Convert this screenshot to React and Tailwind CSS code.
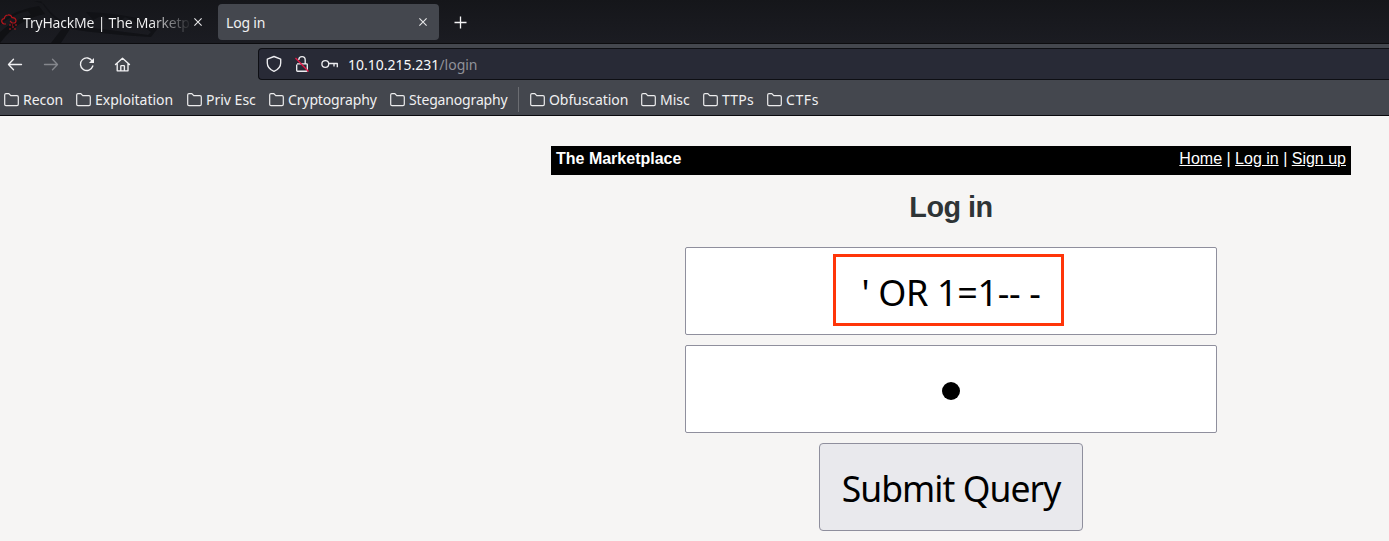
const ui = "font-['Noto_Sans',sans-serif]";

function Folder() {
  return (
    <svg className="h-[14px] w-[15px] shrink-0" viewBox="0 0 15 14" fill="none" stroke="#ececed" strokeWidth="1.2">
      <path d="M.7 11.5V2Q.7.7 2 .7H4.8L6.8 2.7H13Q14.3 2.7 14.3 4V11.3Q14.3 12.6 13 12.6H2Q.7 12.6.7 11.5Z" />
    </svg>
  );
}

function Close() {
  return (
    <svg className="h-2 w-2 shrink-0" viewBox="0 0 8 8" fill="none" stroke="#e8e8ea" strokeWidth="1.1">
      <path d="M.4.4 7.6 7.6M7.6.4.4 7.6" />
    </svg>
  );
}

const bookmarks = [
  { name: "Recon", cls: "w-[72px] tracking-[-0.05px]" },
  { name: "Exploitation", cls: "w-[111px] tracking-[0px]" },
  { name: "Priv Esc", cls: "w-[82px] tracking-[0px]" },
  { name: "Cryptography", cls: "w-[121px] tracking-[-0.13px]" },
  { name: "Steganography", cls: "w-[128px] tracking-[-0.16px]" },
  { name: "Obfuscation", cls: "ml-[11px] w-[111px] tracking-[-0.08px]" },
  { name: "Misc", cls: "w-[62px] tracking-[0px]" },
  { name: "TTPs", cls: "w-[64px] tracking-[0.2px]" },
  { name: "CTFs", cls: "w-[60px] tracking-[0.6px]" },
];

function TabBar() {
  return (
    <div className="relative flex h-11 items-start border-b border-[#0c0c0f] bg-[#1a1b20] bg-linear-to-b from-[#15161a] to-[#1b1c22]">
      <svg className="absolute top-0 left-0 h-[43px] w-[218px]" viewBox="0 0 218 43" fill="none">
        <path d="M0 22Q17 9 39 6L45 14Q18 19 0 43V32Q13 20 31 15L28 11Q12 14 0 25Z" fill="#101114" />
        <path d="M34 1H41Q48 14 64 26L51 43H61L70 29Q102 34 151 37L158 28Q149 21 137 18Q113 13 86 12L93 20L103 15Q108 22 119 23L125 17Q139 23 151 32L148 35Q103 29 76 26Q57 22 44 4Z" fill="#111216" />
      </svg>
      <div className="relative flex h-[44px] w-[218px] items-center">
        <svg className="h-4 w-[17px] shrink-0" viewBox="0 0 17 16" fill="none" stroke="#b5151c" strokeWidth="1.2">
          <path d="M6 10H4Q1.5 9 1.7 6.7Q2 4.5 4.2 4.6Q5 1 8 1Q11 .7 12 3.6Q15.5 3.4 16 6.5Q16 9 14 9H12L10 7" />
          <path d="M9 11h4M12 13h3M15 11h2M9 15h2M14 15h2" strokeDasharray="2 1" />
        </svg>
        <div className="mt-px ml-[6px] w-[169px] bg-linear-to-r from-[#f4f4f5] from-75% to-transparent bg-clip-text text-[14px] leading-5 tracking-[-0.2px] whitespace-nowrap text-transparent">TryHackMe | The Marketpl</div>
        <div className="ml-[2px]"><Close /></div>
      </div>
      <div className="mt-1 flex h-9 w-[221px] items-center rounded bg-[#44474e] px-2">
        <span className="flex-1 text-[14px] tracking-[-0.2px]">Log in</span>
        <div className="mr-[4px]"><Close /></div>
      </div>
      <svg className="mt-[16px] ml-[15px] h-[13px] w-[13px]" viewBox="0 0 13 13" stroke="#f4f4f5" strokeWidth="1.3">
        <path d="M6.5.5V12.5M.5 6.5H12.5" />
      </svg>
    </div>
  );
}

function NavBar() {
  return (
    <div className="flex h-10 items-center">
      <svg className="h-10 w-[258px] shrink-0" viewBox="0 0 258 40" fill="none" stroke="#f0f0f2" strokeWidth="1.35" strokeLinecap="round" strokeLinejoin="round">
        <path d="M13.5 15.2 8.5 20.5 13.5 25.8M8.7 20.5H21.5" />
        <path d="M52.5 15.2 57.5 20.5 52.5 25.8M57.3 20.5H44.5" stroke="#85878d" />
        <path d="M92.3 17.2A6.3 6.3 0 1 0 92.8 22" />
        <path d="M94 14V19H88.9Z" fill="#f0f0f2" stroke="none" />
        <path d="M115.5 20.5 122.5 14.2 129.5 20.5M117.2 19.3V26.8H128V19.3M120.8 26.5V22.2Q120.8 21.6 121.4 21.6H123.8Q124.4 21.6 124.4 22.2V26.5" />
      </svg>
      <div className="flex h-8 flex-1 items-center rounded-l border border-r-0 border-[#0e0f14] bg-[#282a36]">
        <svg className="h-[30px] w-[89px] shrink-0" viewBox="0 0 89 30" fill="none" stroke="#ededf0" strokeWidth="1.35" strokeLinejoin="round">
          <path d="M15 7.5 21.7 10.2V14Q21.7 19.5 15 22.4Q8.3 19.5 8.3 14V10.2Z" />
          <path d="M38 14.8H47.5Q48.3 14.8 48.3 15.6V21.3Q48.3 22.2 47.5 22.2H38.5Q37.7 22.2 37.7 21.3V15.6M39.8 11V10.5Q40 7.6 43 7.6Q46.2 7.6 46.2 11V14.5" />
          <path d="M36.5 9 49.5 22.5" stroke="#e21846" />
          <circle cx="66.3" cy="15" r="3.4" />
          <path d="M69.8 14.5H78.3V18.3M75 14.5V17.5" />
        </svg>
        <span className="mt-px text-[14px] tracking-[0px] whitespace-nowrap text-[#f8f8fa]">10.10.215.231<span className="text-[#91929a]">/login</span></span>
      </div>
    </div>
  );
}

function BookmarkBar() {
  return (
    <div className="flex h-[31px] items-center pl-1">
      {bookmarks.map((b, i) => (
        <div key={b.name} className="contents">
          {i === 5 && <div className="h-[25px] w-px bg-[#6b6d72]" />}
          <div className={`flex shrink-0 items-center gap-1 text-[14px] whitespace-nowrap ${b.cls}`}>
            <Folder />
            <span>{b.name}</span>
          </div>
        </div>
      ))}
    </div>
  );
}

export default function App() {
  return (
    <div className="h-[541px] w-[1389px] overflow-hidden bg-[#f6f5f4]">
      <header className={`h-[116px] border-b border-[#09090d] bg-[#44474e] text-[#f0f0f1] ${ui}`}>
        <TabBar />
        <NavBar />
        <BookmarkBar />
      </header>
      <main className="ml-[551px] w-[800px] pt-[30px] font-['Liberation_Sans',Arial,sans-serif]">
        <nav className="flex h-[29px] justify-between bg-black px-[5px] text-base leading-[25px] text-white">
          <b>The Marketplace</b>
          <span><a className="underline">Home</a> | <a className="underline">Log in</a> | <a className="underline">Sign up</a></span>
        </nav>
        <h1 className="mt-[15px] text-center text-[28.8px] leading-[34px] font-bold tracking-[-0.5px] text-[#2e3436]">Log in</h1>
        <form className={`mt-[23px] flex flex-col items-center text-[36px] leading-[48px] text-black ${ui}`}>
          <div className="relative flex h-[88px] w-[532px] items-center justify-center rounded-xs border border-[#8f8f9d] bg-white">
            <span className="mt-[3px] tracking-[-0.35px] whitespace-pre">' OR 1=1-- -</span>
            <div className="absolute top-[6px] left-[147px] h-[72px] w-[231px] border-3 border-[#ff3509]" />
          </div>
          <div className="mt-[10px] flex h-[88px] w-[532px] items-center justify-center rounded-xs border border-[#8f8f9d] bg-white">
            <div className="mt-[3px] h-[18px] w-[18px] rounded-full bg-black" />
          </div>
          <button type="button" className="mt-[10px] flex h-[88px] w-[264px] items-center justify-center rounded-[4px] border border-[#8f8f9d] bg-[#e9e9ed] whitespace-nowrap">
            <span className="mt-px text-[35.5px] tracking-[-0.95px]">Submit Query</span>
          </button>
        </form>
      </main>
    </div>
  );
}
